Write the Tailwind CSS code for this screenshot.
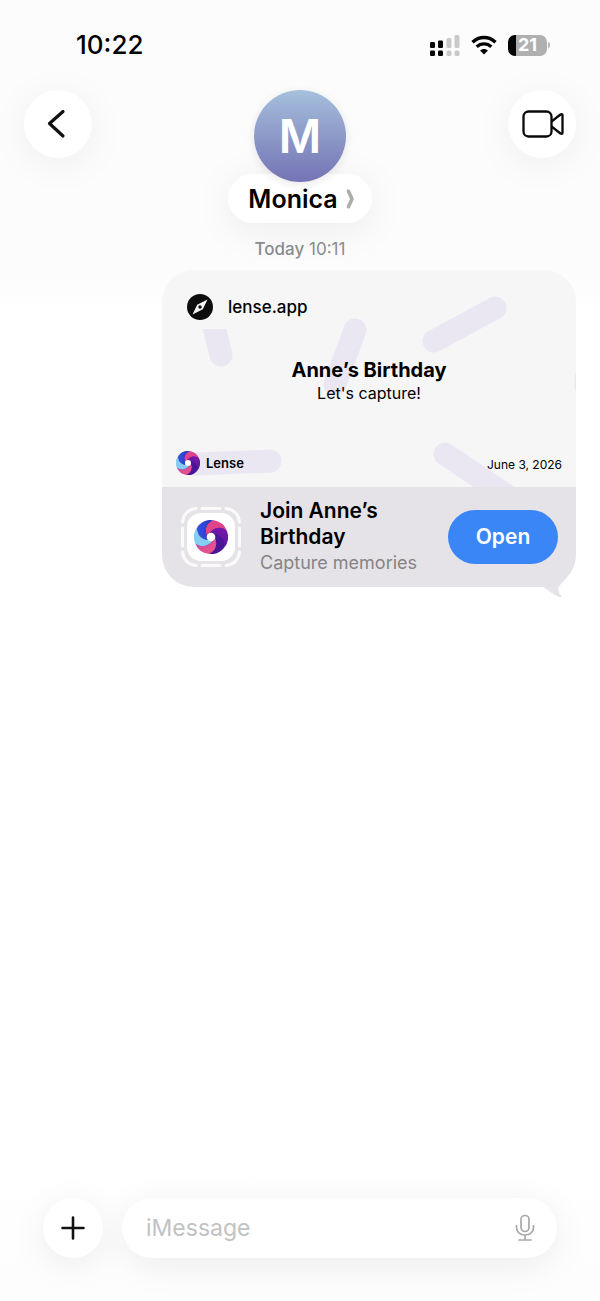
<!DOCTYPE html>
<html lang="en">
<head>
    <meta charset="UTF-8">
    <meta name="viewport" content="width=device-width, initial-scale=1.0">
    <title>Monica - Messages</title>
    <script src="https://cdn.jsdelivr.net/npm/@tailwindcss/browser@4"></script>
</head>
<body class="bg-white text-black font-['Inter',sans-serif]">
    <!-- Swirl logo, used twice in the card -->
    <svg class="absolute size-0" aria-hidden="true">
        <defs>
            <linearGradient id="g-pink" x1="0" y1="0" x2="1" y2="1"><stop offset="0" stop-color="#e0468a"/><stop offset="1" stop-color="#e23f86"/></linearGradient>
            <linearGradient id="g-rose" x1="0" y1="0" x2="1" y2="1"><stop offset="0" stop-color="#f0588a"/><stop offset="1" stop-color="#c8409c"/></linearGradient>
            <linearGradient id="g-blue" x1="0" y1="0" x2="1" y2="1"><stop offset="0" stop-color="#2f58ea"/><stop offset="1" stop-color="#2a2fb4"/></linearGradient>
            <linearGradient id="g-violet" x1="0" y1="0" x2="1" y2="1"><stop offset="0" stop-color="#7a18b0"/><stop offset="1" stop-color="#5a1496"/></linearGradient>
            <path id="blade" d="M-3.9-1A11 11 0 0 1 2.4-16.8A17 17 0 0 1 15.8-6.4A11 11 0 0 0-1-3.9Z"/>
            <symbol id="lense-logo" viewBox="-17 -17 34 34">
                <circle r="16.500" fill="#5a1ba8"/>
                <use href="#blade" fill="url(#g-pink)"/>
                <use href="#blade" fill="url(#g-violet)" transform="rotate(60)"/>
                <use href="#blade" fill="#4a1596" transform="rotate(120)"/>
                <use href="#blade" fill="url(#g-rose)" transform="rotate(180)"/>
                <use href="#blade" fill="#86cdf4" transform="rotate(240)"/>
                <use href="#blade" fill="url(#g-blue)" transform="rotate(300)"/>
                <circle r="4.3" fill="#fff"/>
            </symbol>
        </defs>
    </svg>

    <div class="min-h-screen flex flex-col">
        <header class="bg-[#fcfcfc]">
            <!-- Status bar -->
            <div class="h-[90px] flex items-center justify-between pl-[76px] pr-[50px]">
                <span class="text-[26px] leading-8 font-medium">10:22</span>
                <div class="flex items-center">
                    <svg class="w-[30px] h-[21px]" viewBox="0 0 30 21" aria-label="Signal">
                        <g fill="#050505"><rect x="0" y="7" width="5" height="6" rx="1.2"/><rect x="8" y="5.500" width="5" height="7.500" rx="1.2"/><rect x="0" y="15.500" width="5" height="5.500" rx="1.2"/><rect x="8" y="15.500" width="5" height="5.500" rx="1.2"/></g>
                        <g fill="#c9c9c9"><rect x="16.500" y="3" width="5" height="10" rx="1.5"/><rect x="24.500" y="0" width="5" height="13" rx="1.5"/><rect x="16.500" y="15.500" width="5" height="5.500" rx="1.5"/><rect x="24.500" y="15.500" width="5" height="5.500" rx="1.5"/></g>
                    </svg>
                    <svg class="w-[26px] h-5 ml-[11px] mr-[11px]" viewBox="0 0 26 20" fill="none" stroke="#050505" stroke-width="3.300" aria-label="Wi-Fi">
                        <path d="M1.500 7.200C8 .9 18 .9 24.500 7.200"/>
                        <path d="M5.700 11.800C10 7.900 16 7.900 20.300 11.800"/>
                        <path d="M9 15.500C11.300 13.400 14.700 13.400 17 15.500L13 19.500Z" fill="#050505" stroke="none"/>
                    </svg>
                    <div class="w-[39px] h-[21px] rounded-[7px] overflow-hidden flex items-center justify-center bg-linear-to-r from-[#050505] from-20% to-[#b0b0b0] to-20%">
                        <span class="text-white text-[18px] leading-5 font-bold">21</span>
                    </div>
                    <span class="w-0.5 h-1.5 ml-px rounded-r-full bg-[#b8b8b8]"></span>
                </div>
            </div>

            <!-- Conversation header -->
            <div class="relative flex items-start justify-between px-6">
                <button type="button" aria-label="Back" class="size-[68px] rounded-full bg-white shadow-[0_6px_40px_rgba(0,0,0,0.06)] flex items-center justify-center">
                    <svg class="size-8 mr-1" viewBox="0 0 32 32" fill="none" stroke="#111" stroke-width="3.200" stroke-linecap="round" stroke-linejoin="round"><path d="M23 3.500L9.500 15.500L23 28"/></svg>
                </button>
                <div class="flex flex-col items-center">
                    <div class="relative z-10 size-[92px] -mb-2 rounded-full bg-linear-to-b from-[#a5c0dc] to-[#7573b4] shadow-[0_2px_10px_rgba(0,0,0,0.1)] flex items-center justify-center">
                        <span class="text-white text-[46px] leading-none font-semibold">M</span>
                    </div>
                    <button type="button" class="h-[49px] pl-5 pr-4 rounded-full bg-white shadow-[0_6px_40px_rgba(0,0,0,0.07)] flex items-center gap-2">
                        <span class="text-[25px] leading-8 font-semibold">Monica</span>
                        <svg class="w-2.5 h-5" viewBox="0 0 10 20" fill="none" stroke="#acacac" stroke-width="3.500" stroke-linecap="round" stroke-linejoin="round"><path d="M2.500 2.200L6 10L2.500 17.800"/></svg>
                    </button>
                </div>
                <button type="button" aria-label="FaceTime" class="size-[68px] rounded-full bg-white shadow-[0_6px_40px_rgba(0,0,0,0.06)] flex items-center justify-center">
                    <svg class="w-[42px] h-7 ml-0.5" viewBox="0 0 42 28" fill="none" stroke="#0a0a0a" stroke-width="2.300" stroke-linejoin="round"><rect x="1.500" y="1.500" width="28" height="25" rx="5"/><path d="M29.500 11.500L38.500 4.500Q40.500 3.500 40.500 5.500V22.500Q40.500 24.500 38.500 23.500L29.500 16.500"/></svg>
                </button>
            </div>

            <p class="relative pt-4 pb-[11px] text-center text-[17px] leading-5 text-[#8b8b8e]"><span class="font-medium">Today</span> 10:11</p>
        </header>

        <main class="relative grow bg-linear-to-b from-[#fcfcfc] to-white to-5%">
            <!-- Invite bubble -->
            <article class="relative w-[414px] max-w-full ml-auto mr-6">
                <div class="rounded-[32px] overflow-hidden">
                    <div class="relative aspect-[414/217] bg-[#f6f6f6] flex flex-col">
                        <svg class="absolute inset-0 size-full" viewBox="0 0 414 217" stroke="#eae7f3" stroke-width="23" stroke-linecap="round" aria-hidden="true">
                            <path d="M48 40L59 85M193 60L173 114M272 71L333 38M424 108V116M108 191L34 194M283 184L347 227"/>
                        </svg>
                        <div class="relative self-start mt-[15px] ml-4 pl-2 pr-4 py-2 bg-[#f6f6f6] flex items-center gap-3.5">
                            <svg class="size-7" viewBox="0 0 28 28"><circle cx="14" cy="14" r="13" fill="#0d0d0d"/><path d="M21.500 6.500L16.800 16.200L6.500 21.500L11.200 11.800Z" fill="#f6f6f6"/><circle cx="14" cy="14" r="1.700" fill="#0d0d0d"/></svg>
                            <span class="text-[17px] leading-6 font-medium">lense.app</span>
                        </div>
                        <div class="relative mt-7 text-center">
                            <h2 class="text-[20px] leading-[26px] font-bold">Anne’s Birthday</h2>
                            <p class="text-[16px] leading-5">Let's capture!</p>
                        </div>
                        <div class="relative mt-auto px-3.5 pb-3 flex items-center justify-between">
                            <div class="flex items-center gap-1.5">
                                <svg class="size-6"><use href="#lense-logo"/></svg>
                                <span class="text-[13px] leading-5 font-semibold">Lense</span>
                            </div>
                            <time class="self-end text-[12px] leading-5" datetime="2026-06-03">June 3, 2026</time>
                        </div>
                    </div>

                    <div class="bg-[#e5e3e7] px-[18px] py-[11px] flex items-center">
                        <div class="relative size-[62px] shrink-0 flex items-center justify-center">
                            <svg class="absolute inset-0 size-full" viewBox="0 0 62 62" fill="none" stroke="#fafafa" stroke-width="3" stroke-linecap="round" aria-hidden="true">
                                <path d="M22 2.500H40M22 59.500H40M2.500 22V40M59.500 22V40M2.500 16Q4 4 16 2.500M46 2.500Q58 4 59.500 16M59.500 46Q58 58 46 59.500M16 59.500Q4 58 2.500 46"/>
                            </svg>
                            <div class="size-12 rounded-[14px] bg-white flex items-center justify-center">
                                <svg class="size-[34px]"><use href="#lense-logo"/></svg>
                            </div>
                        </div>
                        <div class="grow pl-[18px] pr-2">
                            <h3 class="text-[21px] leading-[26px] font-semibold">Join Anne’s Birthday</h3>
                            <p class="text-[18px] leading-[26px] text-[#858388] whitespace-nowrap">Capture memories</p>
                        </div>
                        <button type="button" class="w-[110px] h-[54px] shrink-0 rounded-full bg-[#3b86f7] text-white text-[21px] font-semibold">Open</button>
                    </div>
                </div>
                <svg class="absolute right-2 -bottom-[11px] w-[26px] h-5" viewBox="0 0 26 20" fill="#e5e3e7" aria-hidden="true"><path d="M0 8C6 12 10 16 16 18.500C19 20 20.500 18.500 18.500 17C16 14 16 10 17 8C20 5 22 3 24 0H4Z"/></svg>
            </article>
        </main>

        <!-- Composer -->
        <footer class="relative px-[43px] pt-10 pb-[43px] flex items-center gap-[19px] bg-linear-to-b from-white to-[#fdfdfd]">
            <button type="button" aria-label="Add" class="size-[60px] shrink-0 rounded-full bg-white shadow-[0_8px_36px_rgba(0,0,0,0.07)] flex items-center justify-center">
                <svg class="size-6" viewBox="0 0 24 24" stroke="#111" stroke-width="2.600" stroke-linecap="round"><path d="M12 1.500V22.500M1.500 12H22.500"/></svg>
            </button>
            <div class="grow min-w-0 h-[60px] pl-6 pr-5 rounded-full bg-white shadow-[0_8px_36px_rgba(0,0,0,0.07)] flex items-center">
                <input type="text" aria-label="iMessage" placeholder="iMessage" class="grow min-w-0 text-[23px] leading-8 placeholder:text-[#c2c2c2] focus:outline-none">
                <button type="button" aria-label="Dictate" class="shrink-0">
                    <svg class="w-6 h-7" viewBox="0 0 24 28" fill="none" stroke="#a9a9ad" stroke-width="1.700" stroke-linecap="round"><rect x="8" y="1.500" width="8" height="16" rx="4"/><path d="M3.500 11.500V13.500C3.500 18 7 21 12 21S20.500 18 20.500 13.500V11.500M12 21V26M6 26H18"/></svg>
                </button>
            </div>
        </footer>
    </div>
</body>
</html>
